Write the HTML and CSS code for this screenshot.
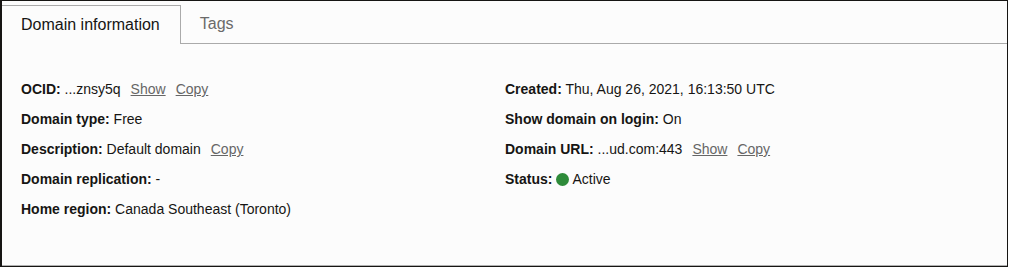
FILE: index.html
```html
<!DOCTYPE html>
<html lang="en">
<head>
  <meta charset="UTF-8" />
  <title>Domain information</title>
  <link rel="stylesheet" href="styles.css">
</head>
<body>
  <div class="frame">
    <div class="tabs">
      <div class="tab active">Domain information</div>
      <div class="tab">Tags</div>
    </div>
    <div class="info">
      <div class="col">
        <div class="row"><b>OCID:</b> ...znsy5q<a class="act">Show</a><a class="act">Copy</a></div>
        <div class="row"><b>Domain type:</b> Free</div>
        <div class="row"><b>Description:</b> Default domain<a class="act">Copy</a></div>
        <div class="row"><b>Domain replication:</b> -</div>
        <div class="row"><b>Home region:</b> Canada Southeast (Toronto)</div>
      </div>
      <div class="col">
        <div class="row"><b>Created:</b> Thu, Aug 26, 2021, 16:13:50 UTC</div>
        <div class="row"><b>Show domain on login:</b> On</div>
        <div class="row"><b>Domain URL:</b> ...ud.com:443<a class="act">Show</a><a class="act">Copy</a></div>
        <div class="row"><b>Status:</b> <span class="dot"></span> Active</div>
      </div>
    </div>
  </div>
</body>
</html>
```

FILE: styles.css
```css
html, body {
  margin: 0;
  padding: 0;
  background: #ffffff;
  font-family: "Liberation Sans", Arial, sans-serif;
  color: #161513;
}

.frame {
  width: 1008px;
  height: 267px;
  box-sizing: border-box;
  border: 1px solid #161513;
  border-left-width: 2px;
  background: #fcfcfc;
  box-shadow: inset 0 -1px 0 #b0b0b0;
}

.tabs {
  display: flex;
  margin-top: 4px;
  height: 38px;
  border-bottom: 1px solid #aaaaaa;
}

.tab {
  padding: 0 20px 0 19px;
  font-size: 16px;
  line-height: 38px;
  color: #6a6a6a;
}

.tab.active {
  color: #161513;
  background: #fcfcfc;
  border: 1px solid #aaaaaa;
  border-left: none;
  border-bottom: none;
  height: 38px;
  margin-bottom: -1px;
}

.info {
  display: grid;
  grid-template-columns: 484px 484px;
  padding: 37px 0 0 19px;
}

.row {
  font-size: 14px;
  height: 30px;
  line-height: 17px;
}

.row b {
  font-weight: bold;
}

.act {
  color: #666666;
  text-decoration: underline;
  margin-left: 10px;
}

.dot {
  display: inline-block;
  width: 13px;
  height: 13px;
  border-radius: 50%;
  background: #2e8b3a;
  vertical-align: -2px;
}
```
